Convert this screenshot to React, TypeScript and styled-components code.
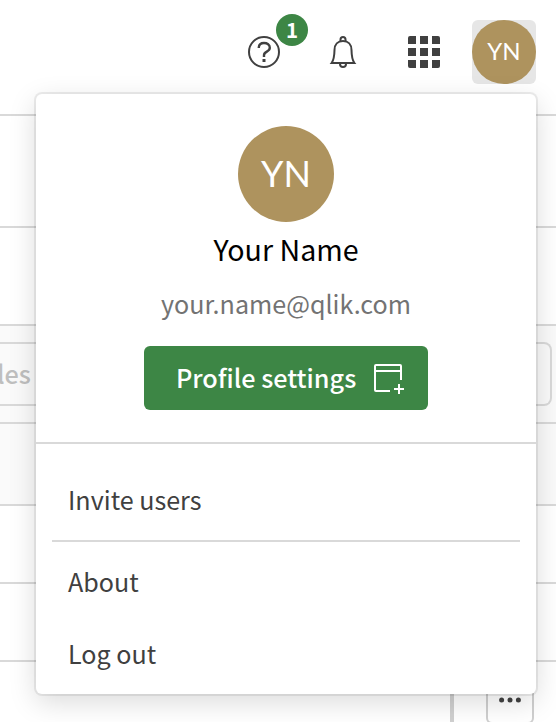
import React from "react";
import styled, { createGlobalStyle } from "styled-components";

const GlobalStyle = createGlobalStyle`
  *, *::before, *::after { box-sizing: border-box; }
  body {
    margin: 0;
    background: #fff;
    color: #404040;
    font-family: "Noto Sans CJK SC", "Noto Sans", sans-serif;
    overflow: hidden;
  }
  button { font: inherit; border: 0; padding: 0; background: none; color: inherit; }
`;

const Page = styled.div`
  position: relative;
  width: 556px;
  height: 722px;
  overflow: hidden;
`;

const TopBar = styled.header`
  display: flex;
  justify-content: flex-end;
  height: 116px;
  padding: 20px 20px 0 0;
  border-bottom: 2px solid #d9d9d9;
`;

const IconButton = styled.button<{ $gap: number }>`
  position: relative;
  display: flex;
  align-items: center;
  justify-content: center;
  width: 64px;
  height: 64px;
  margin-right: ${(p) => p.$gap}px;
`;

const AvatarButton = styled.button`
  width: 64px;
  height: 64px;
  border-radius: 6px;
  background: #e6e6e6;
`;

const Avatar = styled.span<{ $size: number; $font: number }>`
  display: flex;
  align-items: center;
  justify-content: center;
  width: ${(p) => p.$size}px;
  height: ${(p) => p.$size}px;
  padding-bottom: 3px;
  border-radius: 50%;
  background: #ae935e;
  color: #fff;
  font: 400 ${(p) => p.$font}px/1 Lato, sans-serif;
`;

const Badge = styled.span`
  position: absolute;
  top: -6px;
  left: 44px;
  width: 32px;
  height: 32px;
  border-radius: 50%;
  background: #3d8645;
  color: #fff;
  font-size: 20.5px;
  font-weight: 700;
  line-height: 30px;
  text-align: center;
`;

const Band = styled.div<{ $height: number; $tint?: boolean }>`
  height: ${(p) => p.$height}px;
  border-bottom: 2px solid #d9d9d9;
  background: ${(p) => (p.$tint ? "#fafafa" : "#fff")};
`;

const FilterBand = styled(Band)`
  padding: 16px 4px 0 0;
`;

const FilterField = styled.div`
  height: 64px;
  border: 2px solid #d9d9d9;
  border-left: 0;
  border-radius: 0 8px 8px 0;
  color: #bfbfbf;
  font-size: 25.2px;
  font-weight: 500;
  line-height: 59px;
  text-indent: -3px;
`;

const ActionRow = styled.div`
  display: flex;
  height: 60px;
  padding-left: 450px;
`;

const ColumnRule = styled.div`
  width: 4px;
  height: 60px;
  background: #d0d0d0;
`;

const MoreButton = styled.button`
  display: flex;
  justify-content: center;
  align-items: center;
  width: 48px;
  height: 48px;
  margin: 14px 0 0 32px;
  border: 2px solid #cfcfcf;
  border-radius: 6px;
`;

const Popover = styled.section`
  position: absolute;
  left: 36px;
  top: 94px;
  width: 500px;
  height: 600px;
  border-radius: 6px;
  background: #fff;
  box-shadow: 0 0 0 2px rgba(0, 0, 0, 0.07), 0 8px 28px rgba(0, 0, 0, 0.15);
`;

const Profile = styled.div`
  display: flex;
  flex-direction: column;
  align-items: center;
  height: 350px;
  padding-top: 32px;
  border-bottom: 2px solid #d9d9d9;
`;

const Name = styled.div`
  height: 48px;
  margin-top: 3px;
  color: #000;
  font-size: 28.6px;
  line-height: 48px;
`;

const Email = styled.div`
  height: 48px;
  margin-top: 6px;
  color: #737373;
  font-size: 25.1px;
  line-height: 48px;
`;

const SettingsButton = styled.button`
  display: flex;
  align-items: center;
  width: 284px;
  height: 64px;
  margin-top: 19px;
  padding-left: 32px;
  border-radius: 6px;
  background: #3d8645;
  color: #fff;
  font-size: 25.2px;
  font-weight: 500;
  line-height: 62px;

  svg { margin-left: auto; margin-right: 22px; }
`;

const ButtonLabel = styled.span`
  height: 64px;
`;

const Menu = styled.nav`
  padding-top: 20px;
`;

const MenuItem = styled.div`
  height: 72px;
  padding-left: 32px;
  font-size: 25.1px;
  line-height: 70px;
`;

const Divider = styled.hr`
  height: 2px;
  margin: 4px 16px;
  border: 0;
  background: #d9d9d9;
`;

const HelpIcon = () => (
  <svg width="32" height="32" fill="none" stroke="#404040" strokeWidth="2">
    <circle cx="16" cy="16" r="15" />
    <path d="M10.800 12v-.6C11 8.800 13 7 16 7c3.200 0 5.800 1.700 5.800 4.800 0 4.400-5.800 3.200-5.800 7.400v1.800" strokeWidth="2.400" />
    <path d="M14.500 23h3v3h-3z" fill="#404040" stroke="none" />
  </svg>
);

const BellIcon = () => (
  <svg width="32" height="32" fill="none" stroke="#404040" strokeWidth="2">
    <path d="M13.500 5V3.500a2.500 2.500 0 0 1 5 0V5M13 28c0 4 6 4 6 0" />
    <path d="M4.600 27c2.600-3.500 2.800-7 2.900-13C7.500 8.500 10.800 5 16 5s8.500 3.500 8.500 9c.1 6 .3 9.500 2.900 13z" />
  </svg>
);

const GridIcon = () => (
  <svg width="32" height="32" fill="#404040">
    <path d="M2 0h6v8H0V2a2 2 0 0 1 2-2M12 0h8v8h-8zM24 0h6a2 2 0 0 1 2 2v6h-8zM0 12h8v8H0zM12 12h8v8h-8zM24 12h8v8h-8zM0 24h8v8H2a2 2 0 0 1-2-2zM12 24h8v8h-8zM24 24h8v6a2 2 0 0 1-2 2h-6z" />
  </svg>
);

const NewWindowIcon = () => (
  <svg width="32" height="32" fill="none" stroke="#fff" strokeWidth="2">
    <path d="M16 29H2a1 1 0 0 1-1-1V4a1 1 0 0 1 1-1h24a1 1 0 0 1 1 1v14M1 9h26M25 22v10M20 27h10" />
  </svg>
);

const DotsIcon = () => (
  <svg width="24" height="6" fill="#404040">
    <circle cx="3.600" cy="3" r="2.500" />
    <circle cx="12" cy="3" r="2.500" />
    <circle cx="20.400" cy="3" r="2.500" />
  </svg>
);

export default function App() {
  return (
    <Page>
      <GlobalStyle />
      <TopBar>
        <IconButton $gap={15} aria-label="Help">
          <HelpIcon />
          <Badge>1</Badge>
        </IconButton>
        <IconButton $gap={17} aria-label="Notifications">
          <BellIcon />
        </IconButton>
        <IconButton $gap={16} aria-label="Apps">
          <GridIcon />
        </IconButton>
        <AvatarButton>
          <Avatar $size={64} $font={24}>YN</Avatar>
        </AvatarButton>
      </TopBar>
      <Band $height={112} />
      <Band $height={98} />
      <FilterBand $height={98} $tint>
        <FilterField>les</FilterField>
      </FilterBand>
      <Band $height={82} $tint />
      <Band $height={78} />
      <Band $height={78} />
      <ActionRow>
        <ColumnRule />
        <MoreButton aria-label="More">
          <DotsIcon />
        </MoreButton>
      </ActionRow>
      <Popover>
        <Profile>
          <Avatar $size={96} $font={36}>YN</Avatar>
          <Name>Your Name</Name>
          <Email>your.name@qlik.com</Email>
          <SettingsButton>
            <ButtonLabel>Profile settings</ButtonLabel>
            <NewWindowIcon />
          </SettingsButton>
        </Profile>
        <Menu>
          <MenuItem>Invite users</MenuItem>
          <Divider />
          <MenuItem>About</MenuItem>
          <MenuItem>Log out</MenuItem>
        </Menu>
      </Popover>
    </Page>
  );
}
